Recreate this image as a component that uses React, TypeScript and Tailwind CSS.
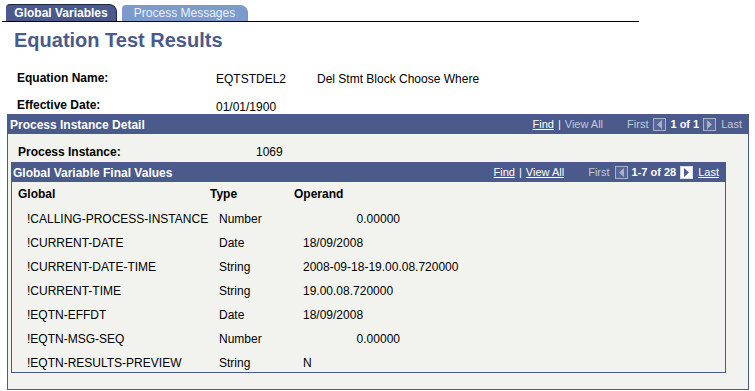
import React from 'react';

type Row = { name: string; type: string; value: string; numeric?: boolean };

const rows: Row[] = [
  { name: '!CALLING-PROCESS-INSTANCE', type: 'Number', value: '0.00000', numeric: true },
  { name: '!CURRENT-DATE', type: 'Date', value: '18/09/2008' },
  { name: '!CURRENT-DATE-TIME', type: 'String', value: '2008-09-18-19.00.08.720000' },
  { name: '!CURRENT-TIME', type: 'String', value: '19.00.08.720000' },
  { name: '!EQTN-EFFDT', type: 'Date', value: '18/09/2008' },
  { name: '!EQTN-MSG-SEQ', type: 'Number', value: '0.00000', numeric: true },
  { name: '!EQTN-RESULTS-PREVIEW', type: 'String', value: 'N' },
];

const ArrowBox = ({ dir, enabled = false }: { dir: 'left' | 'right'; enabled?: boolean }) => (
  <span
    className={`inline-flex items-center justify-center w-[13px] h-[13px] border ${
      enabled ? 'bg-white border-[#d8dce8]' : 'bg-[#56679a] border-[#a9b1c9]'
    }`}
  >
    <svg width="7" height="9" viewBox="0 0 7 9">
      {dir === 'left' ? (
        <polygon points="6,0 6,9 1,4.5" fill={enabled ? '#4a5a8a' : '#a9b1c9'} />
      ) : (
        <polygon points="1,0 1,9 6,4.5" fill={enabled ? '#4a5a8a' : '#a9b1c9'} />
      )}
    </svg>
  </span>
);

const Nav = ({ count, canNext }: { count: string; canNext: boolean }) => (
  <div className="flex items-center text-[11px] leading-[13px] font-normal">
    <span className="text-white underline">Find</span>
    <span className="text-white mx-[4px]">|</span>
    <span className={canNext ? 'text-white underline' : 'text-[#c3c9da]'}>View All</span>
    <span className="text-[#c3c9da] ml-[24px] mr-[5px]">First</span>
    <ArrowBox dir="left" />
    <span className="text-white font-bold mx-[4px]">{count}</span>
    <ArrowBox dir="right" enabled={canNext} />
    <span className={`ml-[5px] ${canNext ? 'text-white underline' : 'text-[#c3c9da]'}`}>Last</span>
  </div>
);

export default function App() {
  return (
    <div className="w-[755px] h-[391px] overflow-hidden bg-white pt-[4px] font-['Liberation_Sans',Arial,sans-serif] text-[12px] leading-[14px] text-black">
      {/* Tabs */}
      <div className="ml-[2px] w-[637px] h-[18px] border-b border-black flex items-end pl-[4px] gap-[5px]">
        <div className="h-[17px] w-[111px] bg-[#4a5a8a] text-white font-bold text-[12px] flex items-center justify-center rounded-tl-[4px] rounded-tr-[8px] border-r border-t border-[#1e2640]">
          Global Variables
        </div>
        <div className="h-[16px] w-[126px] bg-[#7b9bcd] text-[#eef0fb] text-[12px] flex items-center justify-center rounded-tl-[4px] rounded-tr-[8px] border-r border-[#8a94a8]">
          Process Messages
        </div>
      </div>

      {/* Title */}
      <h1 className="mt-[6px] pl-[14px] text-[20px] leading-[24px] font-bold text-[#4a5a8a]">Equation Test Results</h1>

      {/* Fields */}
      <div className="mt-[19px] pl-[17px] flex">
        <span className="w-[199px] font-bold">Equation Name:</span>
        <span className="w-[101px] pt-[1px]">EQTSTDEL2</span>
        <span className="pt-[1px]">Del Stmt Block Choose Where</span>
      </div>
      <div className="mt-[12px] pl-[17px] flex h-[14px]">
        <span className="w-[199px] font-bold">Effective Date:</span>
        <span className="pt-[2px]">01/01/1900</span>
      </div>

      {/* Process Instance Detail */}
      <div className="mt-[2px] ml-[7px] w-[742px] border border-[#4a5a8a] bg-[#f2f3ee] pb-[16px]">
        <div className="h-[19px] bg-[#4a5a8a] flex items-center justify-between pl-[2px] pr-[6px]">
          <span className="text-white font-bold">Process Instance Detail</span>
          <Nav count="1 of 1" canNext={false} />
        </div>
        <div className="pt-[11px] pl-[10px] flex">
          <span className="w-[238px] font-bold">Process Instance:</span>
          <span>1069</span>
        </div>

        {/* Global Variable Final Values */}
        <div className="mt-[3px] ml-[3px] w-[715px] border border-[#4a5a8a]">
          <div className="h-[19px] bg-[#4a5a8a] flex items-center justify-between pl-[1px] pr-[6px]">
            <span className="text-white font-bold">Global Variable Final Values</span>
            <Nav count="1-7 of 28" canNext />
          </div>
          <div className="pt-[5px] pb-[2px] pl-[6px] flex flex-col gap-[10px]">
            <div className="flex font-bold mb-[1px]">
              <span className="w-[192px]">Global</span>
              <span className="w-[84px]">Type</span>
              <span>Operand</span>
            </div>
            {rows.map((r) => (
              <div key={r.name} className="flex">
                <span className="w-[192px] pl-[9px]">{r.name}</span>
                <span className="w-[84px] pl-[9px]">{r.type}</span>
                {r.numeric ? (
                  <span className="w-[106px] text-right">{r.value}</span>
                ) : (
                  <span className="pl-[9px]">{r.value}</span>
                )}
              </div>
            ))}
          </div>
        </div>
      </div>
    </div>
  );
}
